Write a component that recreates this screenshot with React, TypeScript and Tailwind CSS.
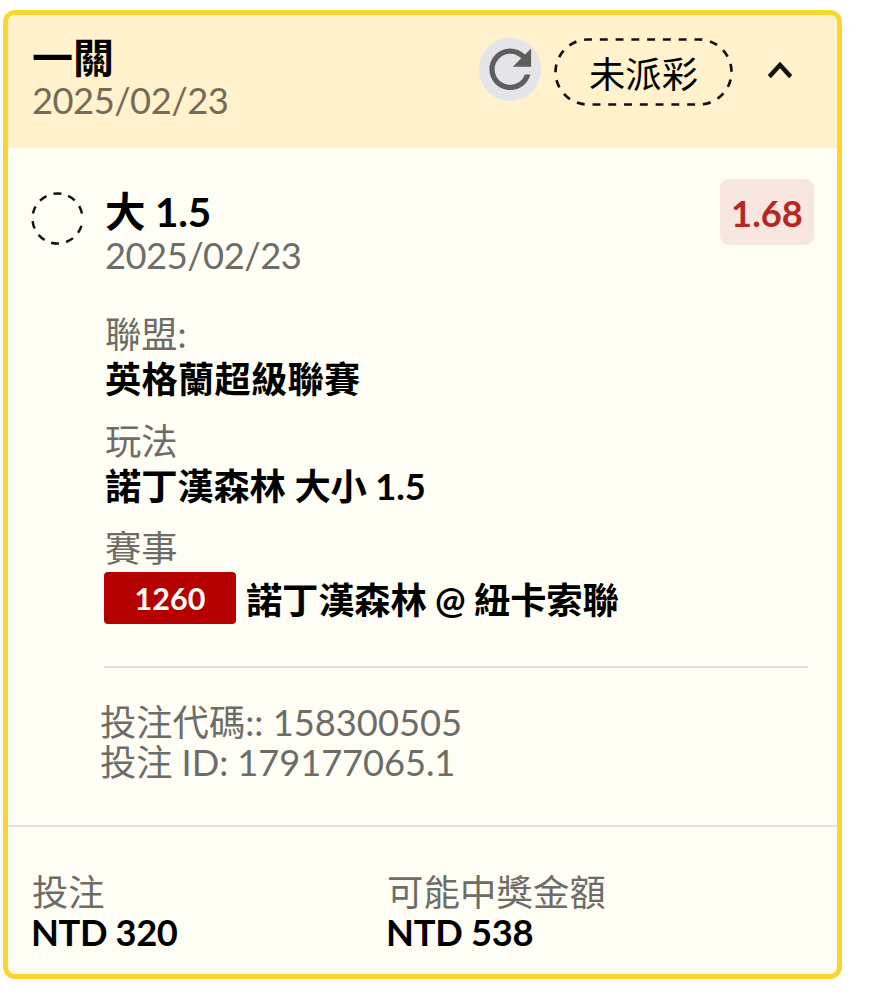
import React from "react";

const entries = [
  { label: "聯盟:", value: "英格蘭超級聯賽", spacing: "tracking-[0.2px]" },
  { label: "玩法", value: "諾丁漢森林 大小 1.5", spacing: "tracking-[-0.15px]" },
];

function RefreshIcon() {
  return (
    <svg viewBox="0 0 24 24" className="size-full" fill="#5e5e5e">
      <path d="M17.65 6.35A7.958 7.958 0 0 0 12 4c-4.42 0-7.99 3.58-7.99 8s3.57 8 7.99 8c3.73 0 6.84-2.55 7.73-6h-2.08A5.99 5.99 0 0 1 12 18c-3.31 0-6-2.69-6-6s2.69-6 6-6c1.66 0 3.14.69 4.22 1.78L13 11h7V4l-2.35 2.35z" />
    </svg>
  );
}

function StatusPill({ children }: { children: React.ReactNode }) {
  return (
    <div className="relative ml-[13px] flex h-[68px] w-[179px] items-center justify-center pt-1">
      <svg className="absolute inset-0" width="179" height="68" viewBox="0 0 179 68" fill="none">
        <rect x="1.5" y="1.5" width="176" height="65" rx="32.5" pathLength="432" stroke="#111" strokeWidth="2.7" strokeDasharray="8 8" strokeDashoffset="4" />
      </svg>
      <span className="leading-[44px]">{children}</span>
    </div>
  );
}

function Header() {
  return (
    <header className="flex h-[133px] items-start bg-[#fff2cc] pl-[24px] pr-[45px]">
      <div className="flex-1 pt-[21px]">
        <h1 className="text-[41px] font-bold leading-[44px] text-black">一關</h1>
        <p className="leading-[40px] tracking-[-0.5px] text-[#736b58]">2025/02/23</p>
      </div>
      <div className="flex items-center pt-[23px] text-black">
        <button className="-mt-[5px] size-[62.5px] rounded-full bg-[#e4e5e8]" aria-label="refresh">
          <RefreshIcon />
        </button>
        <StatusPill>未派彩</StatusPill>
        <svg className="-mt-[5px] ml-[35px]" width="24" height="16" viewBox="6 8 12 7.41" preserveAspectRatio="none" fill="#111" stroke="#111" strokeWidth="0.25">
          <path d="M7.41 15.41L12 10.83l4.59 4.58L18 14l-6-6-6 6z" />
        </svg>
      </div>
    </header>
  );
}

export default function App() {
  return (
    <div className="h-[1000px] w-[880px] bg-white pl-[3px] pt-[10px] font-['Lato','Noto_Sans_CJK_TC',sans-serif] text-[36.3px] text-[#6d6c67]">
      <article className="flex h-[969px] w-[839px] flex-col overflow-hidden rounded-[12px] border-[5px] border-[#fdd52f] bg-[#fffef5]">
        <Header />
        <section className="flex h-[677px] pl-[23px] pr-[23px]">
          <svg className="mt-[44px] shrink-0" width="53" height="53" viewBox="0 0 53 53" fill="none">
            <circle cx="26.5" cy="26.5" r="25" pathLength="360" stroke="#111" strokeWidth="2.5" transform="rotate(17 26.5 26.5)" strokeDasharray="18 16.8 18 16.8 18 16.8 18 16.8 18 16.8 18 16.8 18 16.8 18 16.8 18 16.8 18 28.8" />
          </svg>
          <div className="ml-[21px] flex-1 pt-[43px]">
            <div className="flex h-[84px] justify-between">
              <div>
                <h2 className="-mt-px text-[40.5px] font-bold leading-[44px] tracking-[-0.2px] text-black">大 1.5</h2>
                <p className="mt-px leading-[40px] tracking-[-0.5px]">2025/02/23</p>
              </div>
              <div className="-mt-[12px] flex h-[66px] w-[94px] items-center justify-center rounded-[9px] bg-[#f8e7e1] pt-[2px] font-bold text-[#b7261f]">
                1.68
              </div>
            </div>
            <dl className="pt-[37px]">
              {entries.map((e) => (
                <div key={e.label} className="pb-[17px]">
                  <dt className="leading-[45px]">{e.label}</dt>
                  <dd className={`font-bold leading-[45px] text-black ${e.spacing}`}>{e.value}</dd>
                </div>
              ))}
              <dt className="leading-[45px]">賽事</dt>
              <dd className="mt-px flex items-center font-bold text-black">
                <span className="-ml-px flex h-[52px] w-[132px] items-center justify-center rounded-[4px] bg-[#b50000] pt-px text-[30.5px] text-white">1260</span>
                <span className="ml-[10px] pt-[5px] leading-[47px] tracking-[-0.2px]">諾丁漢森林 @ 紐卡索聯</span>
              </dd>
            </dl>
            <div className="-ml-px mr-[6px] mt-[42px] h-[2px] bg-[#e3e1db]" />
            <div className="-ml-[5px] pt-[34px] leading-[40px]">
              <p>投注代碼:: 158300505</p>
              <p className="tracking-[-0.1px]">投注 ID: 179177065.1</p>
            </div>
          </div>
        </section>
        <footer className="flex flex-1 border-t-2 border-[#e3e1db] pl-[24px] pt-[45px] leading-[40px]">
          <div className="w-[355px]">
            <p>投注</p>
            <p className="-ml-px tracking-[-0.4px] font-bold text-black">NTD 320</p>
          </div>
          <div>
            <p className="tracking-[0.2px]">可能中獎金額</p>
            <p className="-ml-px tracking-[-0.3px] font-bold text-black">NTD 538</p>
          </div>
        </footer>
      </article>
    </div>
  );
}
